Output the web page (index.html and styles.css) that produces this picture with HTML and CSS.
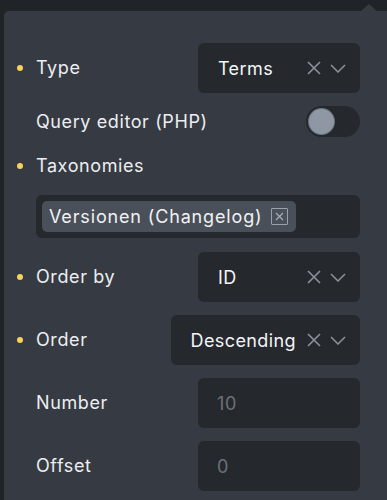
FILE: index.html
```html
<!DOCTYPE html>
<html>
<head>
<meta charset="utf-8">
<link rel="stylesheet" href="styles.css">
</head>
<body>
<div class="panel">
  <div class="row">
    <div class="label"><span class="dot"></span>Type</div>
    <div class="select"><span class="value">Terms</span>
      <svg class="ic-x" width="14" height="14" viewBox="0 0 14 14"><path d="M1 1L13 13M13 1L1 13" stroke="currentColor" stroke-width="1.6" fill="none"/></svg>
      <svg class="ic-chev" width="16" height="9" viewBox="0 0 16 9"><path d="M1 1L8 8L15 1" stroke="currentColor" stroke-width="1.5" fill="none"/></svg>
    </div>
  </div>
  <div class="row short">
    <div class="label">Query editor (PHP)</div>
    <div class="toggle"><span class="knob"></span></div>
  </div>
  <div class="row short tall">
    <div class="label"><span class="dot"></span>Taxonomies</div>
  </div>
  <div class="tags">
    <span class="tag">Versionen (Changelog)<span class="tag-x"><svg width="11" height="11" viewBox="0 0 11 11"><path d="M2 2L9 9M9 2L2 9" stroke="currentColor" stroke-width="1.2" fill="none"/></svg></span></span>
  </div>
  <div class="row">
    <div class="label"><span class="dot"></span>Order by</div>
    <div class="select"><span class="value">ID</span>
      <svg class="ic-x" width="14" height="14" viewBox="0 0 14 14"><path d="M1 1L13 13M13 1L1 13" stroke="currentColor" stroke-width="1.6" fill="none"/></svg>
      <svg class="ic-chev" width="16" height="9" viewBox="0 0 16 9"><path d="M1 1L8 8L15 1" stroke="currentColor" stroke-width="1.5" fill="none"/></svg>
    </div>
  </div>
  <div class="row">
    <div class="label"><span class="dot"></span>Order</div>
    <div class="select"><span class="value">Descending</span>
      <svg class="ic-x" width="14" height="14" viewBox="0 0 14 14"><path d="M1 1L13 13M13 1L1 13" stroke="currentColor" stroke-width="1.6" fill="none"/></svg>
      <svg class="ic-chev" width="16" height="9" viewBox="0 0 16 9"><path d="M1 1L8 8L15 1" stroke="currentColor" stroke-width="1.5" fill="none"/></svg>
    </div>
  </div>
  <div class="row">
    <div class="label">Number</div>
    <div class="input">10</div>
  </div>
  <div class="row">
    <div class="label">Offset</div>
    <div class="input">0</div>
  </div>
</div>
</body>
</html>
```
FILE: styles.css
```css
html, body {
  margin: 0;
  padding: 0;
}
body {
  background: #202328;
  font-family: Inter, "Noto Sans", sans-serif;
  font-size: 18px;
  letter-spacing: 0.6px;
  color: #eceef1;
  height: 500px;
  overflow: hidden;
}
.panel {
  position: relative;
  box-sizing: border-box;
  height: 489px;
  margin: 11px 0 0 4px;
  background: #363a42;
  border-top-left-radius: 5px;
  padding: 32px 27px 0 13px;
  display: flex;
  flex-direction: column;
  gap: 13px;
}
.panel::before {
  content: "";
  position: absolute;
  top: -7px;
  right: 10px;
  border-left: 8px solid transparent;
  border-right: 8px solid transparent;
  border-bottom: 7px solid #363a42;
}
.row {
  display: flex;
  align-items: center;
  justify-content: space-between;
  flex: none;
  height: 50px;
}
.row.short {
  height: 31px;
}
.row.tall {
  height: 32px;
}
.label {
  position: relative;
  padding-left: 19px;
  line-height: 1;
}
.dot {
  position: absolute;
  left: 0;
  top: 50%;
  width: 6px;
  height: 6px;
  margin-top: -3px;
  border-radius: 50%;
  background: #f7d35a;
}
.select {
  display: flex;
  align-items: center;
  box-sizing: border-box;
  min-width: 162px;
  height: 50px;
  padding: 0 14px 0 20px;
  background: #25282d;
  border-radius: 6px;
  color: #f4f5f7;
  letter-spacing: 0.4px;
}
.value {
  flex: 1;
  margin-right: 11px;
}
.ic-x {
  color: #8d929a;
  margin-right: 9px;
}
.ic-chev {
  color: #8d929a;
}
.toggle {
  width: 54px;
  height: 31px;
  border-radius: 16px;
  background: #25282d;
  display: flex;
  align-items: center;
  padding-left: 3px;
  box-sizing: border-box;
}
.knob {
  width: 25px;
  height: 25px;
  border-radius: 50%;
  background: #8f97a4;
  box-shadow: 0 0 0 1px #6d7480;
}
.tags {
  flex: none;
  margin: 0 0 1px 19px;
  background: #25282d;
  border-radius: 6px;
  height: 43px;
  padding: 6px;
  box-sizing: border-box;
  display: flex;
  align-items: center;
}
.tag {
  display: flex;
  align-items: center;
  height: 31px;
  padding: 0 8px 0 7px;
  background: #4a5059;
  border-radius: 5px;
  color: #f1f2f4;
  letter-spacing: 0.85px;
}
.tag-x {
  margin-left: 8px;
  width: 17px;
  height: 17px;
  box-sizing: border-box;
  border: 1px solid #9ba1aa;
  border-radius: 1px;
  display: flex;
  align-items: center;
  justify-content: center;
  color: #a9aeb5;
}
.input {
  box-sizing: border-box;
  width: 162px;
  height: 50px;
  padding: 0 19px;
  background: #25282d;
  border-radius: 6px;
  color: #6c717a;
  display: flex;
  align-items: center;
}
```
